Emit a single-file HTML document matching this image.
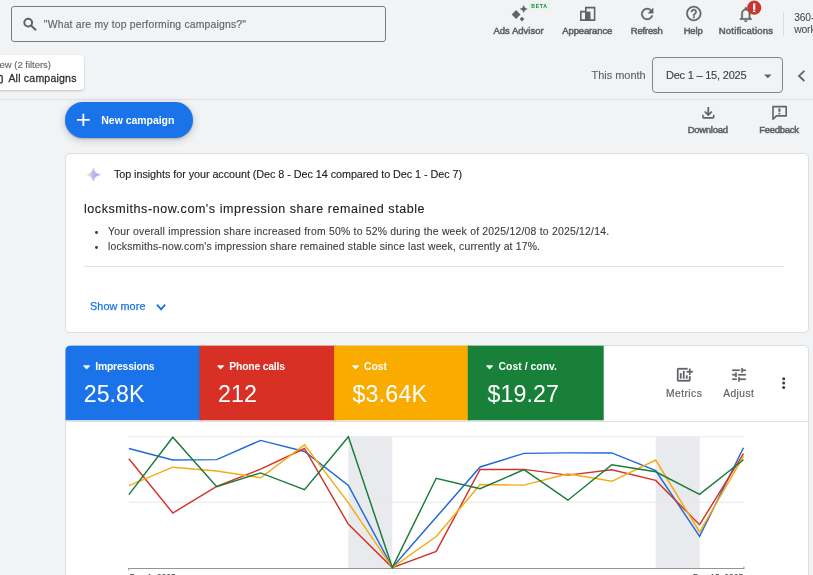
<!DOCTYPE html>
<html><head><meta charset="utf-8">
<style>
html,body{margin:0;padding:0;}
body{width:813px;height:575px;overflow:hidden;background:#f1f3f4;font-family:"Liberation Sans",sans-serif;position:relative;color:#3c4043;}
.abs{position:absolute;}
.t{position:absolute;white-space:pre;line-height:1;}
#txt{position:absolute;left:0;top:0;width:813px;height:575px;will-change:transform;overflow:hidden;}
svg{position:absolute;overflow:visible;}
#search{left:11px;top:6px;width:373px;height:34px;border:1px solid #787c81;border-radius:3px;}
#chip{left:-10px;top:55px;width:94px;height:35px;background:#fff;border-radius:3px;box-shadow:0 1px 2px rgba(60,64,67,.25),0 0 1px rgba(60,64,67,.15);}
#hline{left:0;top:99px;width:813px;height:1px;background:#dfe1e5;}
#newbtn{left:65px;top:102px;width:128px;height:36px;border-radius:18px;background:#1a73e8;box-shadow:0 1px 2px rgba(60,64,67,.3),0 2px 6px 2px rgba(60,64,67,.15);}
#datebox{left:652.200px;top:57.400px;width:128.400px;height:33.600px;border:1px solid #80868b;border-radius:4px;}
#card1{left:65px;top:153px;width:744px;height:180px;background:#fff;border:1px solid #dcdee2;border-radius:5px;box-sizing:border-box;}
#card2{left:65px;top:345px;width:744px;height:240px;background:#fff;border:1px solid #dcdee2;border-radius:5px 5px 0 0;box-sizing:border-box;}
.tile{position:absolute;top:345.600px;height:74.900px;}

.bul{position:absolute;width:2.8px;height:2.8px;border-radius:50%;background:#3c4043;left:95px;}
</style></head><body>
<!-- top bar -->
<div id="search" class="abs"></div>
<svg style="left:0;top:0" width="813" height="50"><circle cx="28.2" cy="22.6" r="3.9" fill="none" stroke="#5f6368" stroke-width="2"/><line x1="31" y1="25.5" x2="36" y2="30.2" stroke="#5f6368" stroke-width="2.1" stroke-linecap="butt"/></svg>
<div id="chip" class="abs"></div>
<svg style="left:-6px;top:74px" width="10" height="10"><rect x="0.8" y="1.5" width="7.4" height="7.4" rx="1.5" fill="none" stroke="#3c4043" stroke-width="1.4"/></svg>
<div id="hline" class="abs"></div>
<div id="newbtn" class="abs"></div>
<svg style="left:0;top:100px" width="200" height="40"><path d="M77 19.9H89.700M83.350 13.800V26" stroke="#fff" stroke-width="1.800" fill="none"/></svg>
<div id="datebox" class="abs"></div>
<svg style="left:0;top:50px" width="813" height="50">
 <path d="M764 24.5h7.6l-3.8 3.8z" fill="#5f6368"/>
 <path d="M804.4 20.8L799 25.9L804.4 31" fill="none" stroke="#5f6368" stroke-width="1.8"/>
</svg>
<!-- header icons -->
<svg style="left:0;top:0" width="813" height="50">
 <g fill="#5f6368">
  <path d="M516.1 10.1l4.4 4.4-4.4 4.4-4.4-4.4z"/>
  <path d="M523.700 5.500c.5 2 1.500 3 3.500 3.500-2 .5-3 1.500-3.500 3.500-.5-2-1.500-3-3.500-3.500 2-.5 3-1.500 3.500-3.500z" stroke="#5f6368" stroke-width="0.500" stroke-linejoin="round"/>
  <path d="M522 16.8l2.3 2.3-2.3 2.3-2.3-2.3z"/>
 </g>
 <rect x="529" y="1.5" width="21" height="9" fill="#e6f4ea"/>
 <path d="M580.800 20.100V11.600h5V7.600h8.800v12.500z" fill="none" stroke="#5f6368" stroke-width="1.600"/>
 <rect x="585" y="11.600" width="5.500" height="8.500" fill="#5f6368"/>
 <g transform="translate(638.2 5) scale(0.75)" fill="#5f6368" stroke="#5f6368" stroke-width="0.45"><path d="M17.65 6.35C16.2 4.9 14.21 4 12 4c-4.42 0-7.99 3.58-7.99 8s3.57 8 7.99 8c3.73 0 6.84-2.55 7.73-6h-2.08c-.82 2.33-3.04 4-5.65 4-3.31 0-6-2.69-6-6s2.69-6 6-6c1.66 0 3.14.69 4.22 1.78L13 11h7V4l-2.35 2.35z"/></g>
 <g transform="translate(684.8 4.5) scale(0.75)" fill="#5f6368" stroke="#5f6368" stroke-width="0.4"><path d="M11 18h2v-2h-2v2zm1-16C6.48 2 2 6.48 2 12s4.48 10 10 10 10-4.48 10-10S17.52 2 12 2zm0 18c-4.41 0-8-3.59-8-8s3.59-8 8-8 8 3.59 8 8-3.59 8-8 8zm0-14c-2.21 0-4 1.79-4 4h2c0-1.1.9-2 2-2s2 .9 2 2c0 2-3 1.75-3 5h2c0-2.25 3-2.5 3-5 0-2.21-1.79-4-4-4z"/></g>
 <g transform="translate(736.8 5.4) scale(0.75)" fill="#5f6368" stroke="#5f6368" stroke-width="0.4"><path d="M12 22c1.1 0 2-.9 2-2h-4c0 1.1.9 2 2 2zm6-6v-5c0-3.07-1.63-5.64-4.5-6.32V4c0-.83-.67-1.5-1.5-1.5s-1.5.67-1.5 1.5v.68C7.64 5.36 6 7.92 6 11v5l-2 2v1h16v-1l-2-2zm-2 1H8v-6c0-2.48 1.51-4.5 4-4.5s4 2.02 4 4.5v6z"/></g>
 <circle cx="754.2" cy="7.700" r="7.100" fill="#c9372c"/>
 <rect x="753.100" y="3.400" width="2.200" height="6.300" fill="#fff"/><rect x="753.100" y="10.500" width="2.200" height="1.600" fill="#fff"/>
 <rect x="783" y="11.7" width="1" height="24" fill="#dadce0"/>
</svg>
<svg style="left:0;top:100px" width="813" height="40">
 <g fill="none" stroke="#5f6368" stroke-width="1.600">
  <path d="M708.300 7.100V14.600M704.700 11.500L708.300 15.100L711.900 11.500" stroke-width="1.750"/>
  <path d="M702.900 14.800V17.100Q702.900 17.900 703.700 17.900H712.900Q713.700 17.900 713.700 17.100V14.800"/>
  <path d="M773 6.600H786.200V15.900H776.300L773 19.200V6.600Z" stroke-linejoin="round"/>
 </g>
 <rect x="778.400" y="8.400" width="2" height="3.400" fill="#5f6368"/><rect x="778.400" y="12.800" width="2" height="1.500" fill="#5f6368"/>
</svg>
<!-- card 1 -->
<div id="card1" class="abs"></div>
<svg style="left:0;top:150px" width="200" height="50">
 <defs><linearGradient id="sg" x1="0" x2="1" y1="0" y2="0"><stop offset="0" stop-color="#f7e8bb"/><stop offset="0.2" stop-color="#e9dcc4"/><stop offset="0.5" stop-color="#b3baf0"/><stop offset="1" stop-color="#a7afec"/></linearGradient></defs>
 <path d="M93.300 18.200c1 3.700 2.800 5.500 7 6.500-4.200 1-6 2.800-7 6.500-1-3.700-2.800-5.500-7-6.500 4.200-1 6-2.800 7-6.500z" fill="url(#sg)" stroke="url(#sg)" stroke-width="0.5" stroke-linejoin="round"/>
</svg>
<div class="bul" style="top:231.200px"></div>
<div class="bul" style="top:246.200px"></div>
<div class="abs" style="left:84px;top:266px;width:700px;height:1px;background:#e3e3e3;"></div>
<svg style="left:0;top:300px" width="200" height="20"><path d="M157 4.700L161.100 9.300L165.200 4.700" fill="none" stroke="#1a73e8" stroke-width="1.900"/></svg>
<!-- card 2 -->
<div id="card2" class="abs"></div>
<svg style="left:0;top:0" width="813" height="430">
 <path d="M65.500 420.300V350.700Q65.500 345.700 70.500 345.700H201V420.300Z" fill="#1a73e8"/>
 <rect x="199.500" y="345.700" width="137" height="74.600" fill="#d93025"/>
 <rect x="334.100" y="345.700" width="136" height="74.600" fill="#f9ab00"/>
 <rect x="467.800" y="345.700" width="135.900" height="74.600" fill="#188038"/>
</svg>
<svg style="left:82.900px;top:365px" width="8" height="5"><path d="M0.600 0.800H6.600L3.600 4.100Z" fill="#fff" stroke="#fff" stroke-width="0.900" stroke-linejoin="round"/></svg>
<svg style="left:217px;top:365px" width="8" height="5"><path d="M0.600 0.800H6.600L3.600 4.100Z" fill="#fff" stroke="#fff" stroke-width="0.900" stroke-linejoin="round"/></svg>
<svg style="left:351.500px;top:365px" width="8" height="5"><path d="M0.600 0.800H6.600L3.600 4.100Z" fill="#fff" stroke="#fff" stroke-width="0.900" stroke-linejoin="round"/></svg>
<svg style="left:486px;top:365px" width="8" height="5"><path d="M0.600 0.800H6.600L3.600 4.100Z" fill="#fff" stroke="#fff" stroke-width="0.900" stroke-linejoin="round"/></svg>
<div class="abs" style="left:66px;top:421px;width:742px;height:1px;background:#e0e0e0;"></div>
<svg style="left:0;top:340px" width="813" height="80">
 <g transform="translate(675.5 25.750) scale(0.75)" fill="#5f6368" stroke="#5f6368" stroke-width="0.4"><path d="M6 9.990h2v7H6zm8 3h2v4h-2zm-4-6h2v10h-2zM20 7V4h-2v3h-3v2h3v3h2V9h3V7zm-2 12H4V5h12V3H4c-1.100 0-2 .9-2 2v14c0 1.100.9 2 2 2h14c1.100 0 2-.9 2-2v-5h-2v5z"/></g>
 <g transform="translate(730 25.750) scale(0.75)" fill="#5f6368" stroke="#5f6368" stroke-width="0.3"><path d="M3 17v2h6v-2H3zM3 5v2h10V5H3zm10 16v-2h8v-2h-8v-2h-2v6h2zM7 9v2H3v2h4v2h2V9H7zm14 4v-2H11v2h10zm-6-4h2V7h4V5h-4V3h-2v6z"/></g>
 <g fill="#3c4043"><circle cx="783.700" cy="38.700" r="1.500"/><circle cx="783.700" cy="43.100" r="1.500"/><circle cx="783.700" cy="47.500" r="1.500"/></g>
</svg>
<!-- chart -->
<svg style="left:0;top:0" width="813" height="575">
 <rect x="348.400" y="436.500" width="43.900" height="131.500" fill="#e8eaed"/>
 <rect x="655.700" y="436.500" width="43.900" height="131.500" fill="#e8eaed"/>
 <rect x="128.900" y="436.300" width="615" height="1" fill="#ebebeb"/>
 <rect x="128.900" y="501.700" width="615" height="1" fill="#e6e6e6"/>
 <rect x="128.400" y="568" width="616" height="0.900" fill="#8a8a8a"/><rect x="128.400" y="568" width="0.900" height="2.500" fill="#8a8a8a"/><rect x="743.500" y="566.500" width="0.900" height="2" fill="#8a8a8a"/>
<polyline points="128.9,448.5 172.8,460.0 216.7,459.6 260.6,440.4 304.5,451.5 348.4,485.4 392.3,567.6 436.2,517.3 480.1,467.0 524.0,453.4 567.9,452.9 611.8,452.9 655.7,470.6 699.6,536.4 743.5,447.7" fill="none" stroke="#2168d6" stroke-width="1.45" stroke-linejoin="miter"/>
<polyline points="128.9,458.8 172.8,513.0 216.7,486.4 260.6,469.1 304.5,448.5 348.4,524.3 392.3,567.6 436.2,551.4 480.1,469.5 524.0,469.4 567.9,475.1 611.8,469.7 655.7,480.4 699.6,524.7 743.5,453.7" fill="none" stroke="#d0342a" stroke-width="1.45" stroke-linejoin="miter"/>
<polyline points="128.9,485.6 172.8,467.2 216.7,471.0 260.6,477.8 304.5,444.8 348.4,502.9 392.3,567.6 436.2,536.5 480.1,484.5 524.0,485.1 567.9,473.7 611.8,481.3 655.7,460.0 699.6,532.0 743.5,456.3" fill="none" stroke="#f4ab12" stroke-width="1.45" stroke-linejoin="miter"/>
<polyline points="128.9,494.6 172.8,437.2 216.7,486.7 260.6,472.9 304.5,489.7 348.4,436.8 392.3,567.6 436.2,478.3 480.1,488.7 524.0,469.7 567.9,500.2 611.8,464.8 655.7,471.8 699.6,494.4 743.5,459.7" fill="none" stroke="#1a7a3a" stroke-width="1.45" stroke-linejoin="miter"/>

</svg>
<div id="txt">
<div class="t" style="left:43.8px;top:19.0px;font-size:10.4px;line-height:11px;font-weight:400;color:#5f6368;letter-spacing:0.187px;-webkit-text-stroke:0.15px #5f6368;">"What are my top performing campaigns?"</div>
<div class="t" style="left:-0.5px;top:59.0px;font-size:9.5px;line-height:11px;font-weight:400;color:#5f6368;letter-spacing:-0.018px;-webkit-text-stroke:0.12px #5f6368;">ew (2 filters)</div>
<div class="t" style="left:8.4px;top:72.0px;font-size:10.5px;line-height:12px;font-weight:400;color:#303134;letter-spacing:0.219px;-webkit-text-stroke:0.3px #303134;">All campaigns</div>
<div class="t" style="left:101.3px;top:114.0px;font-size:10.5px;line-height:12px;font-weight:700;color:#fff;letter-spacing:-0.039px;">New campaign</div>
<div class="t" style="left:493.4px;top:25.0px;font-size:9.5px;line-height:11px;font-weight:400;color:#5f6368;letter-spacing:0.013px;-webkit-text-stroke:0.55px #5f6368;">Ads Advisor</div>
<div class="t" style="left:562.3px;top:25.0px;font-size:9.5px;line-height:11px;font-weight:400;color:#5f6368;letter-spacing:-0.137px;-webkit-text-stroke:0.55px #5f6368;">Appearance</div>
<div class="t" style="left:630.8px;top:25.0px;font-size:9.5px;line-height:11px;font-weight:400;color:#5f6368;letter-spacing:-0.211px;-webkit-text-stroke:0.55px #5f6368;">Refresh</div>
<div class="t" style="left:683.7px;top:25.0px;font-size:9.5px;line-height:11px;font-weight:400;color:#5f6368;letter-spacing:-0.182px;-webkit-text-stroke:0.55px #5f6368;">Help</div>
<div class="t" style="left:718.8px;top:25.0px;font-size:9.5px;line-height:11px;font-weight:400;color:#5f6368;letter-spacing:0.196px;-webkit-text-stroke:0.55px #5f6368;">Notifications</div>
<div class="t" style="left:794.2px;top:12.0px;font-size:10.3px;line-height:11px;font-weight:400;color:#3c4043;letter-spacing:-0.136px;">360-</div>
<div class="t" style="left:794.2px;top:24.0px;font-size:10.3px;line-height:11px;font-weight:400;color:#3c4043;letter-spacing:-0.117px;">work</div>
<div class="t" style="left:531.2px;top:3.0px;font-size:5px;line-height:6px;font-weight:700;color:#188038;letter-spacing:0.850px;">BETA</div>
<div class="t" style="left:591.6px;top:69.0px;font-size:11px;line-height:12px;font-weight:400;color:#5f6368;letter-spacing:-0.047px;-webkit-text-stroke:0.12px #5f6368;">This month</div>
<div class="t" style="left:665.9px;top:69.0px;font-size:11px;line-height:12px;font-weight:400;color:#3c4043;letter-spacing:-0.206px;-webkit-text-stroke:0.12px #3c4043;">Dec 1 – 15, 2025</div>
<div class="t" style="left:687.7px;top:124.0px;font-size:9.5px;line-height:11px;font-weight:400;color:#5f6368;letter-spacing:-0.279px;-webkit-text-stroke:0.55px #5f6368;">Download</div>
<div class="t" style="left:759.3px;top:124.0px;font-size:9.5px;line-height:11px;font-weight:400;color:#5f6368;letter-spacing:-0.305px;-webkit-text-stroke:0.55px #5f6368;">Feedback</div>
<div class="t" style="left:113.9px;top:168.0px;font-size:10.8px;line-height:12px;font-weight:400;color:#202124;letter-spacing:-0.050px;-webkit-text-stroke:0.12px #202124;">Top insights for your account (Dec 8 - Dec 14 compared to Dec 1 - Dec 7)</div>
<div class="t" style="left:84.0px;top:202.0px;font-size:12.5px;line-height:14px;font-weight:400;color:#202124;letter-spacing:0.557px;-webkit-text-stroke:0.12px #202124;">locksmiths-now.com's impression share remained stable</div>
<div class="t" style="left:108.0px;top:226.0px;font-size:10.4px;line-height:11px;font-weight:400;color:#3c4043;letter-spacing:0.222px;-webkit-text-stroke:0.12px #3c4043;">Your overall impression share increased from 50% to 52% during the week of 2025/12/08 to 2025/12/14.</div>
<div class="t" style="left:108.0px;top:241.0px;font-size:10.4px;line-height:11px;font-weight:400;color:#3c4043;letter-spacing:0.183px;-webkit-text-stroke:0.12px #3c4043;">locksmiths-now.com's impression share remained stable since last week, currently at 17%.</div>
<div class="t" style="left:90.0px;top:300.0px;font-size:10.8px;line-height:12px;font-weight:400;color:#1a73e8;letter-spacing:0.099px;-webkit-text-stroke:0.25px #1a73e8;">Show more</div>
<div class="t" style="left:95.2px;top:361.0px;font-size:10.4px;line-height:11px;font-weight:700;color:#fff;letter-spacing:-0.182px;">Impressions</div>
<div class="t" style="left:83.8px;top:380.5px;font-size:23.2px;line-height:26px;font-weight:400;color:#fff;letter-spacing:-0.002px;">25.8K</div>
<div class="t" style="left:229.3px;top:361.0px;font-size:10.4px;line-height:11px;font-weight:700;color:#fff;letter-spacing:-0.205px;">Phone calls</div>
<div class="t" style="left:218.0px;top:380.5px;font-size:23.2px;line-height:26px;font-weight:400;color:#fff;letter-spacing:0.156px;">212</div>
<div class="t" style="left:364.0px;top:361.0px;font-size:10.4px;line-height:11px;font-weight:700;color:#fff;letter-spacing:-0.031px;">Cost</div>
<div class="t" style="left:352.5px;top:380.5px;font-size:23.2px;line-height:26px;font-weight:400;color:#fff;letter-spacing:0.200px;">$3.64K</div>
<div class="t" style="left:498.5px;top:361.0px;font-size:10.4px;line-height:11px;font-weight:700;color:#fff;letter-spacing:0.034px;">Cost / conv.</div>
<div class="t" style="left:487.5px;top:380.5px;font-size:23.2px;line-height:26px;font-weight:400;color:#fff;letter-spacing:0.116px;">$19.27</div>
<div class="t" style="left:666.0px;top:388.0px;font-size:10.2px;line-height:11px;font-weight:400;color:#5f6368;letter-spacing:0.495px;-webkit-text-stroke:0.2px #5f6368;">Metrics</div>
<div class="t" style="left:723.2px;top:388.0px;font-size:10.2px;line-height:11px;font-weight:400;color:#5f6368;letter-spacing:0.474px;-webkit-text-stroke:0.2px #5f6368;">Adjust</div>
<div class="t" style="left:129.6px;top:572.0px;font-size:8.7px;line-height:10px;font-weight:400;color:#3c4043;letter-spacing:-0.066px;">Dec 1, 2025</div>
<div class="t" style="left:692.8px;top:572.0px;font-size:8.7px;line-height:10px;font-weight:400;color:#3c4043;letter-spacing:-0.099px;">Dec 15, 2025</div>
</div>
</body></html>
